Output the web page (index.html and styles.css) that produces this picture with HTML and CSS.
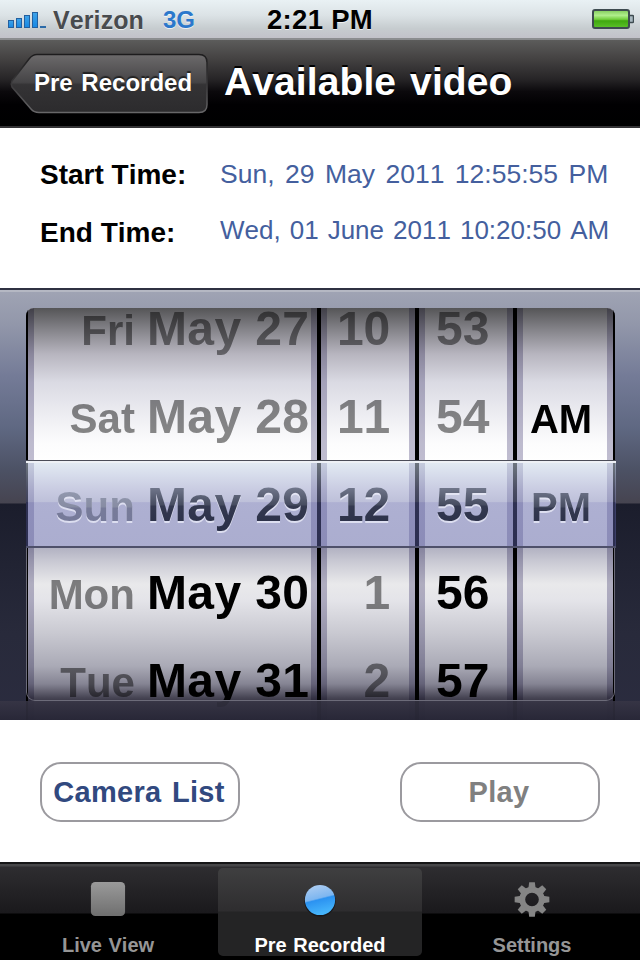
FILE: index.html
```html
<!DOCTYPE html>
<html lang="en">
<head>
<meta charset="utf-8">
<title>Available video</title>
<link rel="stylesheet" href="styles.css">
</head>
<body>
<div class="screen">
  <header class="status">
    <svg class="signal" width="40" height="18" viewBox="0 0 40 18">
      <defs><linearGradient id="sig" x1="0" y1="0" x2="0" y2="1"><stop offset="0" stop-color="#3fa3e8"/><stop offset="1" stop-color="#1688e4"/></linearGradient></defs>
      <g fill="url(#sig)" stroke="#23609f" stroke-width="1"><rect x=".5" y="8.500" width="5" height="7"/><rect x="8.500" y="6.500" width="5" height="9"/><rect x="16.500" y="3.500" width="5" height="12"/><rect x="24.500" y=".5" width="5" height="15"/></g>
      <rect x="32" y="14" width="6" height="2" fill="#2c6ba8"/>
    </svg>
    <span class="carrier">Verizon</span>
    <span class="network">3G</span>
    <span class="clock">2:21 PM</span>
    <svg class="battery" width="42" height="22" viewBox="0 0 42 22">
      <defs><linearGradient id="bat" x1="0" y1="0" x2="0" y2="1"><stop offset="0" stop-color="#7fca58"/><stop offset=".3" stop-color="#b0ee8c"/><stop offset=".52" stop-color="#72ce3c"/><stop offset=".6" stop-color="#3fa80f"/><stop offset="1" stop-color="#5cc32a"/></linearGradient></defs>
      <rect x="1" y="1" width="36" height="18" rx="2" fill="url(#bat)" stroke="#3e4b50" stroke-width="2"/>
      <path d="M38 6.500h2.500q1 0 1 1v5q0 1-1 1H38" fill="#a8b8c0" stroke="#3e4b50" stroke-width="1.500"/>
    </svg>
  </header>
  <nav class="navbar">
    <div class="back">
      <svg class="back-shape" width="200" height="62" viewBox="0 0 200 62">
        <defs><linearGradient id="bk" x1="0" y1="0" x2="0" y2="1"><stop offset="0" stop-color="#6c6a6b"/><stop offset=".48" stop-color="#454446"/><stop offset=".52" stop-color="#343335"/><stop offset="1" stop-color="#2c2b2d"/></linearGradient>
        <linearGradient id="bks" x1="0" y1="0" x2="0" y2="1"><stop offset="0" stop-color="#1d1c1d"/><stop offset=".5" stop-color="#39383a"/><stop offset="1" stop-color="#686769"/></linearGradient></defs>
        <path d="M28 1.500H190Q198 1.500 198 9.500V51.500Q198 59.500 190 59.500H30Q25 59.500 22 56L3 34Q1.500 31 3 28L20 6Q23.500 1.500 28 1.500Z" fill="url(#bk)" stroke="url(#bks)" stroke-width="1.500"/>
      </svg>
      <span class="back-label">Pre Recorded</span>
    </div>
    <h1 class="title">Available video</h1>
  </nav>
  <section class="times">
    <div class="time"><span class="time-name">Start Time:</span><span class="time-value start">Sun, 29 May 2011 12:55:55 PM</span></div>
    <div class="time"><span class="time-name">End Time:</span><span class="time-value end">Wed, 01 June 2011 10:20:50 AM</span></div>
  </section>
  <section class="picker">
    <div class="wheel">
      <div class="columns">
        <div class="col date">
          <div class="row off"><small>Fri</small>May 27</div>
          <div class="row off"><small>Sat</small>May 28</div>
          <div class="row sel"><small>Sun</small><span>May 29</span></div>
          <div class="row"><small>Mon</small>May 30</div>
          <div class="row"><small>Tue</small>May 31</div>
        </div>
        <div class="col hour">
          <div class="row off">10</div>
          <div class="row off">11</div>
          <div class="row sel"><span>12</span></div>
          <div class="row off">1</div>
          <div class="row off">2</div>
        </div>
        <div class="col minute">
          <div class="row off">53</div>
          <div class="row off">54</div>
          <div class="row sel"><span>55</span></div>
          <div class="row">56</div>
          <div class="row">57</div>
        </div>
        <div class="col half">
          <div class="row"></div>
          <div class="row">AM</div>
          <div class="row sel"><span>PM</span></div>
          <div class="row"></div>
          <div class="row"></div>
        </div>
      </div>
      <div class="shade"></div>
      <div class="rim"></div>
    </div>
    <div class="lip"></div>
    <div class="selection"></div>
  </section>
  <section class="actions">
    <button class="btn">Camera List</button>
    <button class="btn disabled">Play</button>
  </section>
  <footer class="tabs">
    <div class="tab">
      <svg width="40" height="40" viewBox="0 0 40 40"><defs><linearGradient id="sq" x1="0" y1="0" x2="0" y2="1"><stop offset="0" stop-color="#9a9a9a"/><stop offset="1" stop-color="#6f6f6f"/></linearGradient></defs><rect x="2.500" y="2" width="35" height="35" rx="4.500" fill="url(#sq)"/></svg>
      <span>Live View</span>
    </div>
    <div class="tab active">
      <svg width="40" height="40" viewBox="0 0 40 40"><defs><linearGradient id="dot" x1="0" y1="0" x2=".25" y2="1"><stop offset="0" stop-color="#b4d0f2"/><stop offset=".52" stop-color="#7db6f0"/><stop offset=".57" stop-color="#2b92f1"/><stop offset="1" stop-color="#45b4fb"/></linearGradient></defs><circle cx="20" cy="21.500" r="16" fill="#17171a"/><circle cx="20" cy="20.500" r="15.500" fill="url(#dot)"/></svg>
      <span>Pre Recorded</span>
    </div>
    <div class="tab">
      <svg width="40" height="40" viewBox="-20 -20 40 40"><g fill="#858585"><circle r="10" fill="none" stroke="#858585" stroke-width="6"/><g id="teeth"><path id="tooth" d="M-3.800-11L-2.900-17.800H2.900L3.800-11Z"/><use href="#tooth" transform="rotate(45)"/><use href="#tooth" transform="rotate(90)"/><use href="#tooth" transform="rotate(135)"/></g><use href="#teeth" transform="rotate(180)"/></g></svg>
      <span>Settings</span>
    </div>
  </footer>
</div>
</body>
</html>
```
FILE: styles.css
```css
* { box-sizing: border-box; }
body { margin: 0; background: #000; font-family: "Liberation Sans", Arial, sans-serif; font-weight: bold; font-kerning: none; }
.screen { width: 640px; height: 960px; overflow: hidden; display: flex; flex-direction: column; background: #fff; white-space: nowrap; }

.status { position: relative; height: 40px; flex: none; display: flex; align-items: center; padding: 2px 6px 0 8px; border-bottom: 2px solid #8b8d8f; background: linear-gradient(#e9f1f4, #dce3e6 40%, #c6cccf 75%, #c2c2c9); text-shadow: 0 1px 0 rgba(255,255,255,.7); }
.signal { margin-top: 2px; }
.carrier { margin-left: 5px; font-size: 25px; letter-spacing: .1px; color: #484b4e; }
.network { margin-left: 19px; font-size: 24px; color: #2b78cc; }
.clock { position: absolute; left: 0; width: 100%; text-align: center; font-size: 27.5px; letter-spacing: .3px; color: #000; }
.battery { margin-left: auto; }

.navbar { height: 88px; flex: none; display: flex; align-items: flex-start; padding: 13px 0 0 9px; border-bottom: 2px solid #343335; background: linear-gradient(#5c5c5b, #464444 20%, #262426 46%, #0b090c 60%, #010002 75%, #000); color: #fff; }
.back { position: relative; width: 200px; height: 62px; padding: 15px 0 0 25px; }
.back-shape { position: absolute; left: 0; top: 0; }
.back-label { position: relative; font-size: 24px; line-height: 30px; word-spacing: 2px; text-shadow: 0 -2px 1px #222; }
.title { margin: 7px 0 0 15px; font-size: 39px; line-height: 44px; letter-spacing: .1px; word-spacing: 3px; text-shadow: 0 -2px 0 #000; }

.times { height: 160px; flex: none; padding: 17px 0 0 40px; }
.time { height: 58px; display: flex; }
.time-name { width: 180px; font-size: 28px; line-height: 59px; color: #000; }
.time-value { font-size: 26.5px; line-height: 58px; font-weight: normal; word-spacing: 3.1px; color: #445f9e; }
.time-value.end { font-size: 26px; line-height: 55px; word-spacing: 1.8px; }

.picker { position: relative; isolation: isolate; height: 432px; flex: none; padding: 18px 25px 0 26px; border-top: 2px solid #2f3142; background: linear-gradient(#a0a4b4, #9297aa 8%, #747b97 20%, #5f6882 32%, #4c5164 42%, #464450 49.600%, #1b1d2c 49.700%, #282a3b 80%, #2b2c3f); box-shadow: inset 0 2px 0 #b5b8c3; }
.wheel { position: relative; height: 412px; overflow: hidden; padding: 0 2px; background: #000; border-radius: 8px 8px 0 0; }
.columns { display: flex; gap: 4px; }
.col { height: 412px; border: solid #c0bdd0; border-width: 0 6px; background: #fff; }
.date { width: 290px; text-align: right; padding-right: 2px; letter-spacing: .4px; }
.hour { width: 94px; text-align: right; padding-right: 19px; }
.minute { width: 94px; text-align: center; padding-right: 7px; }
.half { width: 96px; text-align: center; padding-right: 8px; }
.row { height: 88px; font-size: 48px; line-height: 90px; color: #000; }
.row:first-child { margin-top: -24px; }
.row small { font-size: 42px; letter-spacing: 0; color: #888; margin-right: 12px; }
.row.off { color: #8a8a8a; }
.row.sel { position: relative; z-index: 2; filter: drop-shadow(0 2px 0 rgba(236,238,250,.75)); }
.row.sel span, .row.sel small { display: inline-block; line-height: 88px; color: transparent; background: linear-gradient(#777d92 24px, #464c60 44px, #343950 45px, #292e46 70px); -webkit-background-clip: text; background-clip: text; }
.row.sel small { background-image: linear-gradient(#969db2 22px, #878ca3 44px, #777b99 45px, #75799a 70px); }
.half .row { font-size: 40px; line-height: 94px; }
.shade { position: absolute; inset: 0; mix-blend-mode: multiply; background: linear-gradient(#555557 0, #85848a 22px, #b7b5bf 46px, #dadae3 74px, #ececf1 105px, #fcfcfd 135px, #fff 155px, #fff 238px, #b2b2c2 240px, #cacad4 254px, #e9e9eb 276px, #e4e4e9 292px, #c9c9d1 325px, #aaaab6 358px, #858493 376px, #454352 390px, #302f3d 396px, #292838 412px); }
.rim { position: absolute; left: 0; right: 0; top: 240px; height: 153px; border: solid #6c6b79; border-width: 0 1px 1px; border-radius: 0 0 9px 9px; }
.lip { position: absolute; left: 0; right: 0; bottom: 0; height: 19px; background: linear-gradient(rgba(56,54,70,.85), rgba(40,39,55,.95)); }
.selection { position: absolute; z-index: 1; left: 26px; right: 24px; top: 170px; height: 88px; border-top: 1px solid #4b4d58; border-bottom: 2px solid #4e506a; background: linear-gradient(rgba(205,220,235,.55), rgba(145,150,195,.5) 35%, rgba(125,130,180,.5) 48%, rgba(93,97,165,.5) 49%, rgba(88,92,160,.5)); box-shadow: inset 0 2px 0 #eef1f6; }

.actions { height: 142px; flex: none; display: flex; justify-content: space-between; padding: 42px 40px 0; }
.btn { width: 200px; height: 60px; padding: 0 2px 0 0; border: 2px solid #9b9a9f; border-radius: 21px; background: #fff; font: bold 29px "Liberation Sans", Arial, sans-serif; font-kerning: none; letter-spacing: .3px; word-spacing: 2px; color: #31497f; }
.btn.disabled { color: #808080; }

.tabs { height: 98px; flex: none; display: flex; justify-content: space-between; padding: 4px 4px 0; border-top: 2px solid #161617; background: linear-gradient(#464648 0, #464648 2px, #2e2d30 3px, #1a191c 49px, #000 50px); }
.tab { width: 208px; height: 88px; display: flex; flex-direction: column; align-items: center; padding-top: 12px; color: #969696; font-size: 20px; }
.tab span { line-height: 22px; margin-top: 15px; word-spacing: 1px; }
.tab.active { width: 204px; color: #fff; border-radius: 5px; background: linear-gradient(#3f3f40, #2e2d2f 43px, #242425 44px, #242425); }
```
